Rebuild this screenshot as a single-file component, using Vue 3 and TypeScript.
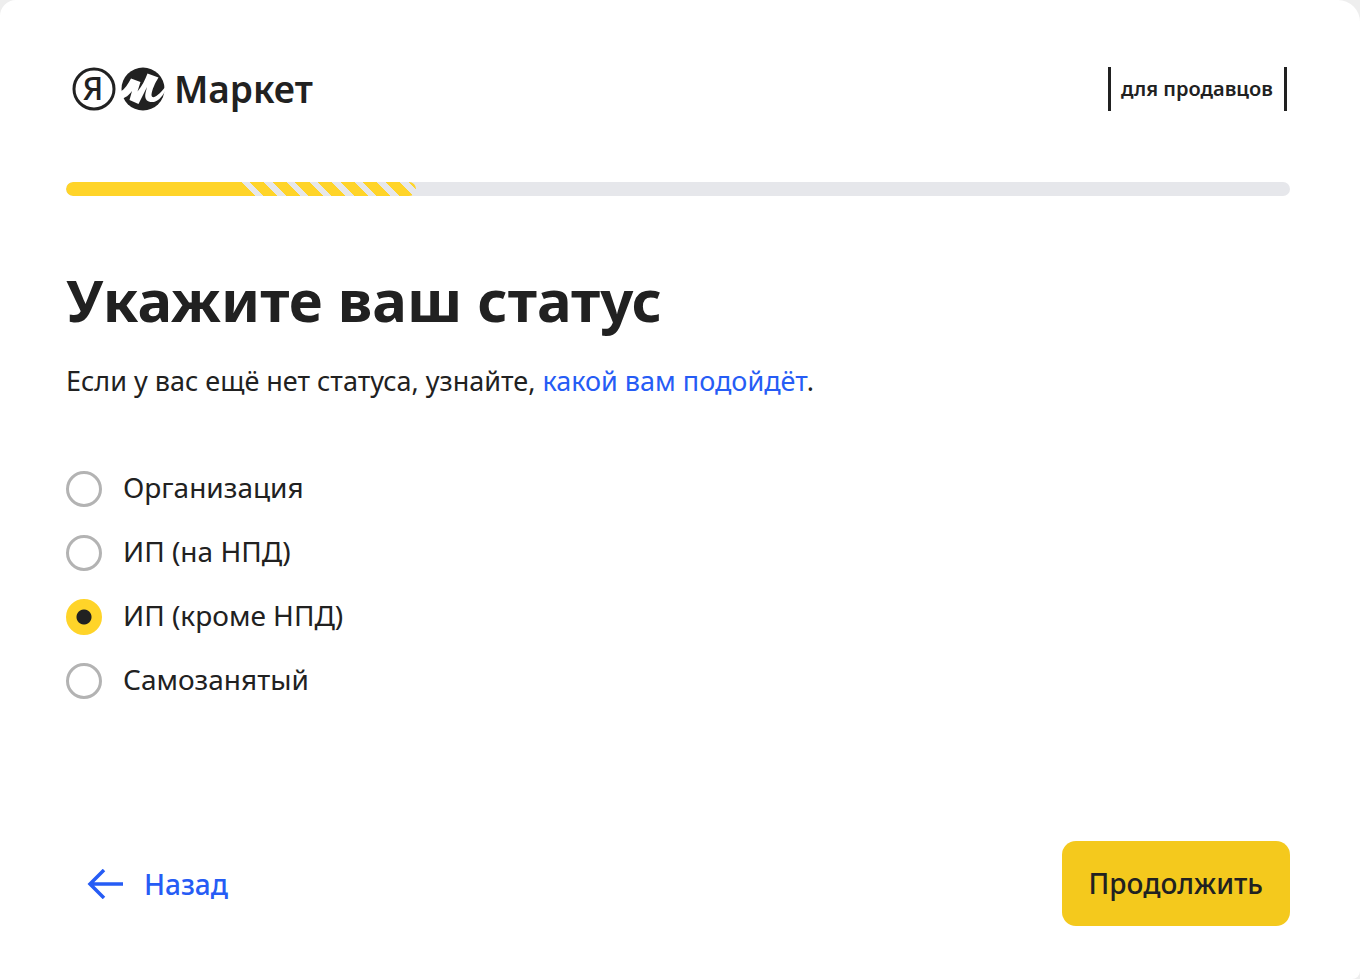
<script setup lang="ts">
import { ref } from 'vue'

interface StatusOption {
  value: string
  label: string
}

const options: StatusOption[] = [
  { value: 'org', label: 'Организация' },
  { value: 'ip-npd', label: 'ИП (на НПД)' },
  { value: 'ip', label: 'ИП (кроме НПД)' },
  { value: 'self', label: 'Самозанятый' },
]

const selected = ref('ip')
</script>

<template>
  <main class="card">
    <header class="header">
      <a class="brand" href="#" aria-label="Яндекс Маркет">
        <svg class="brand-marks" width="93" height="44" viewBox="0 0 93 44" aria-hidden="true">
          <circle cx="22" cy="22" r="20" fill="none" stroke="#212121" stroke-width="3" />
          <text class="brand-letter" x="21" y="33" text-anchor="middle">Я</text>
          <circle cx="71" cy="22" r="21.5" fill="#212121" />
          <path
            d="M48 25 C53 22 56 17 59 11.5 L68.5 15 L65.5 24.5 C70 19 73 13 75.5 6.5 L86.500 10.5 C83 16 80 23 79.500 27.500 C79.300 33 86 30 94 19 L94 22 C91 29 86 35 80 35 C74 35 72.5 31 73.5 26 L75 20 L66.5 37 L57.5 33 L60 24 C57 28 54 31 48 32 Z"
            fill="#fff"
          />
        </svg>
        <span class="brand-name">Маркет</span>
      </a>
      <span class="audience">для продавцов</span>
    </header>

    <div class="progress" role="progressbar" aria-label="Шаг регистрации" aria-valuenow="14" aria-valuemin="0" aria-valuemax="100">
      <div class="progress-current">
        <div class="progress-done"></div>
        <div class="progress-active"></div>
      </div>
    </div>

    <h1 class="title">Укажите ваш статус</h1>
    <p class="hint">Если у вас ещё нет статуса, узнайте, <a href="#">какой вам подойдёт</a>.</p>

    <form class="form" @submit.prevent>
      <div class="options" role="radiogroup" aria-label="Статус">
        <label v-for="option in options" :key="option.value" class="option">
          <input v-model="selected" type="radio" name="status" :value="option.value" />
          <span>{{ option.label }}</span>
        </label>
      </div>

      <footer class="actions">
        <button class="back" type="button">
          <svg width="38" height="30" viewBox="0 0 38 30" fill="none" stroke="currentColor" stroke-width="3.500" aria-hidden="true">
            <path d="M37 15H4M18 1L4 15L18 29" />
          </svg>
          <span>Назад</span>
        </button>
        <button class="next" type="submit">Продолжить</button>
      </footer>
    </form>
  </main>
</template>

<style>
body {
  margin: 0;
  background: #eee;
}
</style>

<style scoped>
.card {
  box-sizing: border-box;
  display: flex;
  flex-direction: column;
  min-height: 100vh;
  padding: 67px 70px 53px 66px;
  border-radius: 16px 22px 8px 0;
  background: #fff;
  color: #212121;
  font-family: "Noto Sans", "Open Sans", sans-serif;
  font-size: 28px;
  line-height: 32px;
}

.header {
  display: flex;
  align-items: center;
  justify-content: space-between;
  height: 44px;
  padding: 0 3px 0 6px;
}

.brand {
  display: flex;
  align-items: center;
  gap: 9px;
  color: inherit;
  text-decoration: none;
}

.brand-marks {
  display: block;
}

.brand-letter {
  font-family: "Noto Sans", sans-serif;
  font-size: 32px;
  font-weight: 500;
  fill: #212121;
}

.brand-name {
  font-size: 37px;
  font-weight: 600;
  line-height: 42px;
}

.audience {
  padding: 0 11px 0 10px;
  border: solid #212121;
  border-width: 0 3px;
  font-size: 20px;
  font-weight: 600;
  line-height: 44px;
}

.progress {
  height: 14px;
  margin-top: 71px;
  border-radius: 7px;
  background: #e6e7eb;
  overflow: hidden;
}

.progress-current {
  display: flex;
  width: 28.6%;
  height: 100%;
  border-radius: 7px;
  overflow: hidden;
}

.progress-done {
  flex: 1;
  background: #ffd429;
}

.progress-active {
  flex: 1;
  background: repeating-linear-gradient(45deg, #ffd429 0 10px, #e6e7eb 10px 16px);
}

.title {
  margin: 68px 0 0;
  font-size: 58px;
  font-weight: 700;
  line-height: 72px;
}

.hint {
  margin: 29px 0 0;
  font-size: 27px;
}

.hint a {
  color: #265cf5;
  text-decoration: none;
}

.form {
  display: flex;
  flex: 1;
  flex-direction: column;
}

.options {
  display: flex;
  flex-direction: column;
  align-items: flex-start;
  gap: 28px;
  margin-top: 74px;
}

.option {
  display: flex;
  align-items: flex-start;
  gap: 21px;
  cursor: pointer;
}

.option input {
  box-sizing: border-box;
  width: 36px;
  height: 36px;
  margin: 0;
  border: 3px solid #b3b3b3;
  border-radius: 50%;
  background: #fff;
  appearance: none;
}

.option input:checked {
  border-color: #ffd429;
  background: radial-gradient(circle, #212121 7px, #ffd429 8px);
}

.actions {
  display: flex;
  align-items: center;
  justify-content: space-between;
  margin-top: auto;
}

.back,
.next {
  border: 0;
  font: inherit;
  font-weight: 500;
  cursor: pointer;
}

.back {
  display: flex;
  align-items: center;
  gap: 20px;
  padding: 0 20px;
  background: none;
  color: #265cf5;
}

.next {
  padding: 26px 27px 27px;
  border-radius: 14px;
  background: #f4c91d;
  color: #212121;
}
</style>
